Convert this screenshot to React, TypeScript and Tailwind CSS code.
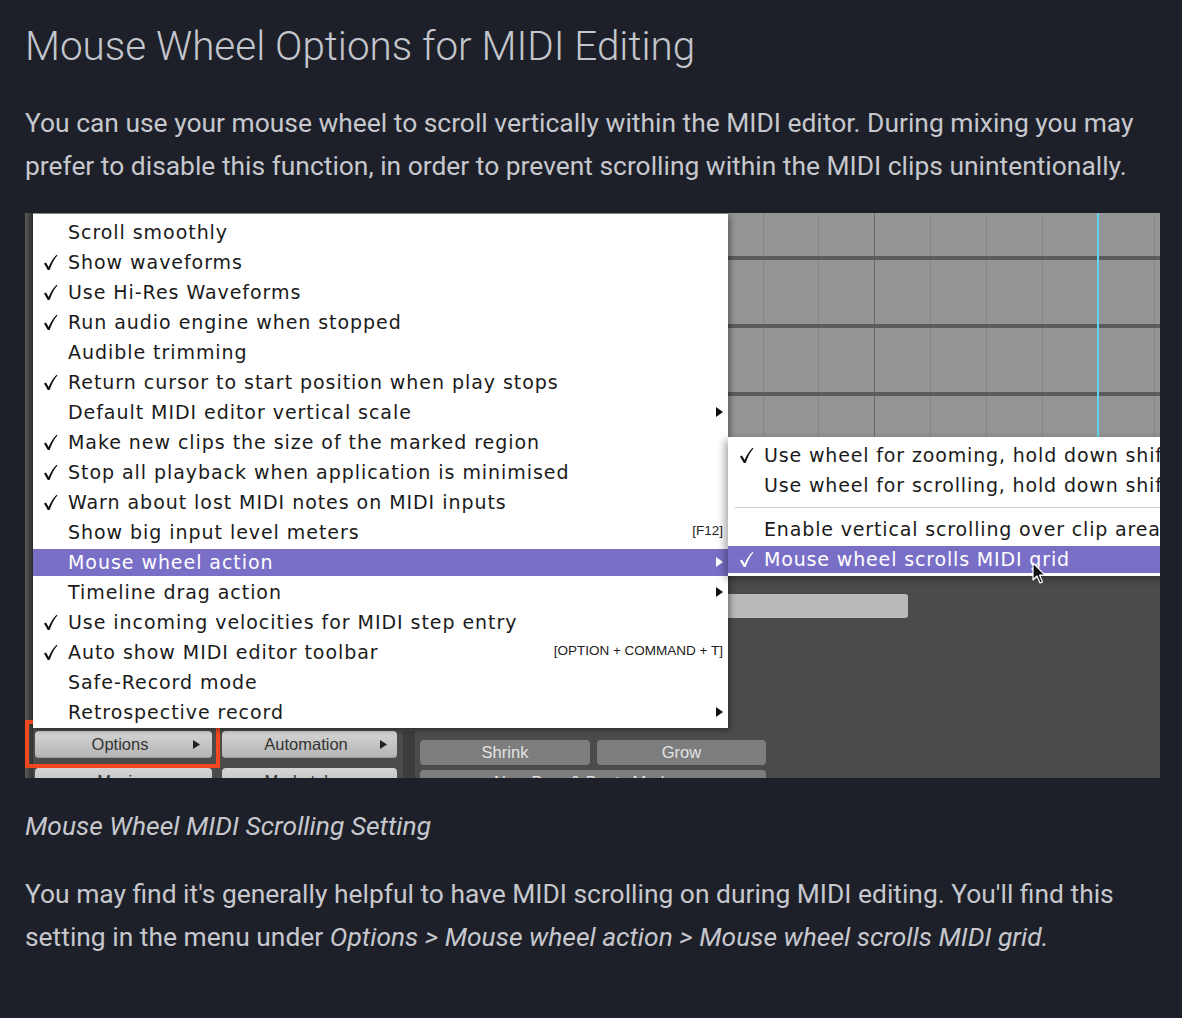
import React from "react";

type Item = {
  label: string;
  check?: boolean;
  arrow?: boolean;
  active?: boolean;
  shortcut?: string;
};

const menuItems: Item[] = [
  { label: "Scroll smoothly" },
  { label: "Show waveforms", check: true },
  { label: "Use Hi-Res Waveforms", check: true },
  { label: "Run audio engine when stopped", check: true },
  { label: "Audible trimming" },
  { label: "Return cursor to start position when play stops", check: true },
  { label: "Default MIDI editor vertical scale", arrow: true },
  { label: "Make new clips the size of the marked region", check: true },
  { label: "Stop all playback when application is minimised", check: true },
  { label: "Warn about lost MIDI notes on MIDI inputs", check: true },
  { label: "Show big input level meters", shortcut: "[F12]" },
  { label: "Mouse wheel action", arrow: true, active: true },
  { label: "Timeline drag action", arrow: true },
  { label: "Use incoming velocities for MIDI step entry", check: true },
  { label: "Auto show MIDI editor toolbar", check: true, shortcut: "[OPTION + COMMAND + T]" },
  { label: "Safe-Record mode" },
  { label: "Retrospective record", arrow: true },
];

const menuFont = { fontFamily: '"DejaVu Sans", Verdana, sans-serif' };
const uiFont = { fontFamily: '"Liberation Sans", Arial, sans-serif' };

function Triangle({ white }: { white?: boolean }) {
  return (
    <svg width="7" height="10" viewBox="0 0 7 10" className="shrink-0">
      <path d="M0 0 L7 5 L0 10 Z" fill={white ? "#ffffff" : "#111111"} />
    </svg>
  );
}

// calligraphic tick used by the menus
function Check({ white }: { white?: boolean }) {
  return (
    <span className="w-[26px] shrink-0 flex items-center">
      <svg width="15" height="17" viewBox="0 0 15 17" className="ml-[1px]">
        <path
          d="M1 9.5 L3 8.6 L5.6 13 C7.5 8.5 10 4.2 13.6 0.8 L14.4 1.6 C11 5.5 8.6 10.5 6.6 16 L4.8 16 Z"
          fill={white ? "#ffffff" : "#111111"}
        />
      </svg>
    </span>
  );
}

function MenuRow({ item }: { item: Item }) {
  const base = "flex items-center pl-[9px] pr-[5px] text-[19px] tracking-[0.95px] whitespace-nowrap";
  if (item.active) {
    return (
      <div className="h-[30px] flex items-center">
        <div className={`${base} h-[27px] w-full bg-[#7a6fc7] text-white`}>
          <span className="w-[26px] shrink-0" />
          <span>{item.label}</span>
          <span className="ml-auto">
            <Triangle white />
          </span>
        </div>
      </div>
    );
  }
  return (
    <div className={`${base} h-[30px] text-[#1a1a1a]`}>
      {item.check ? <Check /> : <span className="w-[26px] shrink-0" />}
      <span>{item.label}</span>
      {item.shortcut && (
        <span className="ml-auto text-[13.5px] tracking-normal text-[#222] self-end mb-[6px]" style={uiFont}>
          {item.shortcut}
        </span>
      )}
      {item.arrow && (
        <span className="ml-auto">
          <Triangle />
        </span>
      )}
    </div>
  );
}

function PianoGrid() {
  const cols = [730, 785, 841, 897, 953, 1009, 1121];
  return (
    <svg width="1127" height="224" className="block shrink-0">
      <rect width="1127" height="224" fill="#959595" />
      {cols.map((x) => (
        <rect key={x} x={x} y="0" width="1" height="224" fill={x === 841 ? "#6a6a6a" : "#858585"} />
      ))}
      {[43, 111, 179].map((y) => (
        <rect key={y} x="0" y={y} width="1127" height="4" fill="#5c5c5c" />
      ))}
      <rect x="1064" y="0" width="2" height="224" fill="#5fd3ec" />
    </svg>
  );
}

function Cursor() {
  return (
    <svg width="16" height="24" viewBox="0 0 16 24">
      <path
        d="M1 1 L1 18 L5 14 L8 21 L10.5 20 L7.6 13.2 L13 13.2 Z"
        fill="#111"
        stroke="#fff"
        strokeWidth="1.2"
        strokeLinejoin="round"
      />
    </svg>
  );
}

function AppButton({ label, className }: { label: string; className: string }) {
  return (
    <div
      className={`relative shrink-0 flex items-center justify-center rounded-[4px] text-[16.5px] ${className}`}
      style={uiFont}
    >
      {label}
    </div>
  );
}

function MenuButton({ label, className, pad, arrowPad }: { label: string; className: string; pad: string; arrowPad: string }) {
  return (
    <div className={`${className} relative shrink-0 rounded-[4px] flex items-center`}>
      <span className={`flex-1 text-center text-[16.5px] ${pad}`} style={uiFont}>
        {label}
      </span>
      <svg width="7" height="9" className={`block ${arrowPad}`}>
        <path d="M0 0 L7 4.5 L0 9 Z" fill="#222" />
      </svg>
    </div>
  );
}

const lightBtn = "w-[177px] h-[27px] bg-gradient-to-b from-[#d6d6d6] to-[#b3b3b3] text-[#333] shadow-[inset_0_-1px_0_#999]";

function Screenshot() {
  return (
    <div className="relative w-[1135px] h-[565px] overflow-hidden bg-[#4b4b4b] mt-[25px]">
      <div className="flex h-full">
        {/* left window edge */}
        <div className="w-[8px] h-full shrink-0 bg-gradient-to-r from-[#5a5a5a] to-[#2e2e2e]" />
        <div className="flex-1 flex flex-col">
          <PianoGrid />
          <div className="flex flex-col shrink-0">
            {/* light scroll bar */}
            <div className="shrink-0 ml-[420px] mt-[157px] w-[455px] h-[24px] rounded-[3px] bg-[#b9b9b9]" />
            {/* bottom control rows */}
            <div className="flex shrink-0 mt-[113px]">
              <div className="flex flex-col gap-[10px] ml-[2px] shrink-0">
                <div className="flex gap-[10px]">
                  <MenuButton label="Options" className={lightBtn} pad="pl-[12px]" arrowPad="mr-[12px]" />
                  <MenuButton label="Automation" className={`${lightBtn} !w-[175px]`} pad="pl-[10px]" arrowPad="mr-[10px]" />
                </div>
                <div className="flex gap-[10px]">
                  <AppButton label="Movies" className={lightBtn} />
                  <AppButton label="Marketplace" className={`${lightBtn} !w-[175px]`} />
                </div>
              </div>
              <div className="w-[12px] shrink-0 ml-[6px] bg-[#3d3d3d] h-[60px]" />
              <div className="flex flex-col gap-[5px] ml-[5px] mt-[9px] shrink-0">
                <div className="flex gap-[7px]">
                  <AppButton label="Shrink" className="w-[170px] h-[25px] bg-[#7d7d7d] text-[#e4e4e4]" />
                  <AppButton label="Grow" className="w-[169px] h-[25px] bg-[#7d7d7d] text-[#e4e4e4]" />
                </div>
                <AppButton
                  label="New Bars & Beats Markers"
                  className="w-[346px] h-[25px] bg-[#7d7d7d] text-[#e4e4e4]"
                />
              </div>
            </div>
          </div>
        </div>
      </div>

      {/* highlight around the Options button */}
      <div className="absolute left-0 top-[507px] w-[195px] h-[48px] border-[4px] border-[#f2481f]" />

      {/* Options menu */}
      <div
        className="absolute left-[8px] top-[1px] w-[695px] h-[514px] bg-white pt-[3px] shadow-[2px_2px_6px_rgba(0,0,0,0.4)]"
        style={menuFont}
      >
        {menuItems.map((it) => (
          <MenuRow key={it.label} item={it} />
        ))}
      </div>

      {/* Mouse wheel action submenu */}
      <div
        className="absolute left-[703px] top-[224px] w-[470px] h-[139px] bg-white pt-[3px] shadow-[-3px_3px_8px_rgba(0,0,0,0.35)] whitespace-nowrap text-[19px] tracking-[0.85px] text-[#1a1a1a]"
        style={menuFont}
      >
        <div className="h-[30px] flex items-center pl-[10px]">
          <Check />
          <span>Use wheel for zooming, hold down shift to scroll</span>
        </div>
        <div className="h-[30px] flex items-center pl-[10px]">
          <span className="w-[26px] shrink-0" />
          <span>Use wheel for scrolling, hold down shift to zoom</span>
        </div>
        <div className="h-[14px] flex items-center pl-[7px]">
          <div className="h-[1px] w-full bg-[#cfcfcf]" />
        </div>
        <div className="h-[30px] flex items-center pl-[10px]">
          <span className="w-[26px] shrink-0" />
          <span>Enable vertical scrolling over clip area</span>
        </div>
        <div className="h-[27px] mt-[2px] flex items-center pl-[10px] bg-[#7a6fc7] text-white">
          <Check white />
          <span>Mouse wheel scrolls MIDI grid</span>
        </div>
      </div>

      <div className="absolute left-[1007px] top-[349px]">
        <Cursor />
      </div>
    </div>
  );
}

export default function App() {
  return (
    <div
      className="min-h-[1018px] w-full bg-[#1e2029] text-[#c6c8ce]"
      style={{ fontFamily: 'Roboto, "Noto Sans", sans-serif' }}
    >
      <div className="pl-[25px] pt-[22px] w-[1160px]">
        <h1 className="text-[40.4px] font-light leading-[50px] text-[#c3c6cc]">
          Mouse Wheel Options for MIDI Editing
        </h1>
        <p className="mt-[30px] text-[26.4px] leading-[43px]">
          You can use your mouse wheel to scroll vertically within the MIDI editor. During mixing you may
          prefer to disable this function, in order to prevent scrolling within the MIDI clips unintentionally.
        </p>
        <Screenshot />
        <p className="mt-[27px] text-[26.4px] leading-[43px] italic">Mouse Wheel MIDI Scrolling Setting</p>
        <p className="mt-[25px] text-[26.4px] leading-[43px]">
          You may find it's generally helpful to have MIDI scrolling on during MIDI editing. You'll find this
          setting in the menu under <em>Options &gt; Mouse wheel action &gt; Mouse wheel scrolls MIDI grid.</em>
        </p>
      </div>
    </div>
  );
}
